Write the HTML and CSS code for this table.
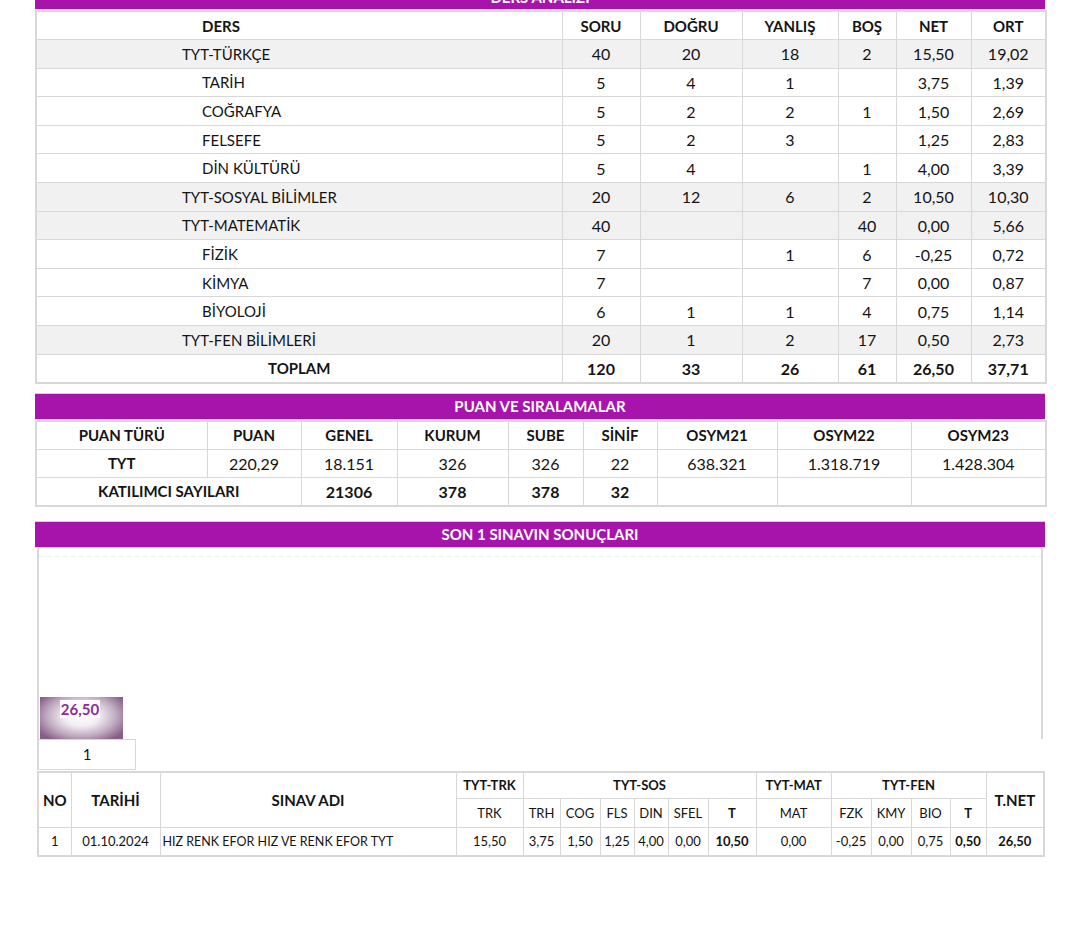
FILE: index.html
```html
<!DOCTYPE html>
<html lang="tr">
<head>
<meta charset="utf-8">
<title>Ders Analizi</title>
<link rel="stylesheet" href="styles.css">
</head>
<body>
<div class="page">
  <section class="block">
    <div class="bar">DERS ANALİZİ</div>
    <table class="t1">
      <colgroup>
        <col class="c-ders"><col class="c-soru"><col class="c-dogru"><col class="c-yanlis"><col class="c-bos"><col class="c-net"><col class="c-ort">
      </colgroup>
      <thead>
        <tr><th class="name sub">DERS</th><th>SORU</th><th>DOĞRU</th><th>YANLIŞ</th><th>BOŞ</th><th>NET</th><th>ORT</th></tr>
      </thead>
      <tbody>
        <tr class="main"><td class="name">TYT-TÜRKÇE</td><td>40</td><td>20</td><td>18</td><td>2</td><td>15,50</td><td>19,02</td></tr>
        <tr><td class="name sub">TARİH</td><td>5</td><td>4</td><td>1</td><td></td><td>3,75</td><td>1,39</td></tr>
        <tr><td class="name sub">COĞRAFYA</td><td>5</td><td>2</td><td>2</td><td>1</td><td>1,50</td><td>2,69</td></tr>
        <tr><td class="name sub">FELSEFE</td><td>5</td><td>2</td><td>3</td><td></td><td>1,25</td><td>2,83</td></tr>
        <tr><td class="name sub">DİN KÜLTÜRÜ</td><td>5</td><td>4</td><td></td><td>1</td><td>4,00</td><td>3,39</td></tr>
        <tr class="main"><td class="name">TYT-SOSYAL BİLİMLER</td><td>20</td><td>12</td><td>6</td><td>2</td><td>10,50</td><td>10,30</td></tr>
        <tr class="main"><td class="name">TYT-MATEMATİK</td><td>40</td><td></td><td></td><td>40</td><td>0,00</td><td>5,66</td></tr>
        <tr><td class="name sub">FİZİK</td><td>7</td><td></td><td>1</td><td>6</td><td>-0,25</td><td>0,72</td></tr>
        <tr><td class="name sub">KİMYA</td><td>7</td><td></td><td></td><td>7</td><td>0,00</td><td>0,87</td></tr>
        <tr><td class="name sub">BİYOLOJİ</td><td>6</td><td>1</td><td>1</td><td>4</td><td>0,75</td><td>1,14</td></tr>
        <tr class="main"><td class="name">TYT-FEN BİLİMLERİ</td><td>20</td><td>1</td><td>2</td><td>17</td><td>0,50</td><td>2,73</td></tr>
        <tr class="total"><td class="label">TOPLAM</td><td>120</td><td>33</td><td>26</td><td>61</td><td>26,50</td><td>37,71</td></tr>
      </tbody>
    </table>
  </section>

  <section class="block gap-s">
    <div class="bar">PUAN VE SIRALAMALAR</div>
    <table class="t2">
      <colgroup>
        <col class="p1"><col class="p2"><col class="p3"><col class="p4"><col class="p5"><col class="p6"><col class="p7"><col class="p8"><col class="p9">
      </colgroup>
      <tr><th>PUAN TÜRÜ</th><th>PUAN</th><th>GENEL</th><th>KURUM</th><th>SUBE</th><th>SİNİF</th><th>OSYM21</th><th>OSYM22</th><th>OSYM23</th></tr>
      <tr><th>TYT</th><td>220,29</td><td>18.151</td><td>326</td><td>326</td><td>22</td><td>638.321</td><td>1.318.719</td><td>1.428.304</td></tr>
      <tr class="bold"><td colspan="2">KATILIMCI SAYILARI</td><td>21306</td><td>378</td><td>378</td><td>32</td><td></td><td></td><td></td></tr>
    </table>
  </section>

  <section class="block gap-m">
    <div class="bar">SON 1 SINAVIN SONUÇLARI</div>
    <div class="chart">
      <div class="plot">
        <div class="column">
          <span class="col-label">26,50</span>
        </div>
      </div>
      <div class="axis">
        <div class="axis-cell">1</div>
      </div>
    </div>
    <table class="t4">
      <colgroup>
        <col class="w-no"><col class="w-tar"><col class="w-ad"><col class="w-trk"><col class="w-trh"><col class="w-cog"><col class="w-fls"><col class="w-din"><col class="w-sfel"><col class="w-t1"><col class="w-mat"><col class="w-fzk"><col class="w-kmy"><col class="w-bio"><col class="w-t2"><col class="w-tnet">
      </colgroup>
      <tr class="h1">
        <th rowspan="2" class="big">NO</th>
        <th rowspan="2" class="big">TARİHİ</th>
        <th rowspan="2" class="big">SINAV ADI</th>
        <th>TYT-TRK</th>
        <th colspan="6">TYT-SOS</th>
        <th>TYT-MAT</th>
        <th colspan="4">TYT-FEN</th>
        <th rowspan="2" class="big">T.NET</th>
      </tr>
      <tr class="h2">
        <td>TRK</td><td>TRH</td><td>COG</td><td>FLS</td><td>DIN</td><td>SFEL</td><th>T</th><td>MAT</td><td>FZK</td><td>KMY</td><td>BIO</td><th>T</th>
      </tr>
      <tr class="d">
        <td>1</td><td>01.10.2024</td><td class="left">HIZ RENK EFOR HIZ VE RENK EFOR TYT</td><td>15,50</td><td>3,75</td><td>1,50</td><td>1,25</td><td>4,00</td><td>0,00</td><th>10,50</th><td>0,00</td><td>-0,25</td><td>0,00</td><td>0,75</td><th>0,50</th><th>26,50</th>
      </tr>
    </table>
  </section>
</div>
</body>
</html>
```

FILE: styles.css
```css
* { box-sizing: border-box; }

body {
  margin: 0;
  background: #ffffff;
  font-family: Lato, "Open Sans", "Noto Sans", sans-serif;
  color: #141414;
}

.page {
  width: 1010px;
  margin: -17px 0 0 35px;
  display: flex;
  flex-direction: column;
}

.block { display: flex; flex-direction: column; }
.gap-s { margin-top: 9px; }
.gap-m { margin-top: 14px; }

.bar {
  height: 27px;
  background: #a714ab;
  border-top: 1px solid #eec0ee;
  border-bottom: 1px solid #f3d2f3;
  color: #ffffff;
  font-weight: 700;
  font-size: 15px;
  display: flex;
  align-items: center;
  justify-content: center;
}

table {
  width: 100%;
  border-collapse: collapse;
  table-layout: fixed;
  border: 2px solid #d8d8d8;
}

th, td {
  border: 1px solid #d8d8d8;
  padding: 0;
  text-align: center;
  white-space: nowrap;
  overflow: hidden;
  font-size: 16px;
  font-weight: 400;
}
th { font-weight: 700; font-size: 15px; }

/* DERS ANALIZI */
.t1 tr { height: 28.6px; }
.c-ders { width: 526px; }
.c-soru { width: 78px; }
.c-dogru { width: 102px; }
.c-yanlis { width: 96px; }
.c-bos { width: 58px; }
.c-net { width: 75px; }
.c-ort { width: 75px; }
.t1 .name { text-align: left; padding-left: 145px; font-size: 15px; }
.t1 .name.sub { padding-left: 165px; }
.t1 .main td { background: #f1f1f1; }
.t1 .total td { font-weight: 700; }
.t1 .total .label { font-size: 15px; }

/* PUAN VE SIRALAMALAR */
.t2 tr { height: 28.3px; }
.p1 { width: 171px; }
.p2 { width: 94px; }
.p3 { width: 96px; }
.p4 { width: 111px; }
.p5 { width: 75px; }
.p6 { width: 74px; }
.p7 { width: 120px; }
.p8 { width: 134px; }
.p9 { width: 135px; }
.t2 .bold td { font-weight: 700; }
.t2 .bold td:first-child { font-size: 15px; }

/* SON 1 SINAV CHART */
.chart {
  margin: 0 2px;
  display: flex;
  flex-direction: column;
}
.plot {
  height: 191px;
  border-left: 2px solid #d8d8d8;
  border-right: 2px solid #d8d8d8;
  display: flex;
  align-items: flex-end;
  padding-left: 1px;
  background-image: linear-gradient(to right, #ececec 50%, transparent 50%);
  background-size: 8px 1px;
  background-repeat: repeat-x;
  background-position: 0 8px;
}
.column {
  width: 83px;
  height: 42px;
  background: radial-gradient(ellipse 60% 70% at 50% 45%, #ffffff 0%, #f1eef1 35%, #bfa9bf 70%, #8a5d88 100%);
  display: flex;
  justify-content: center;
  align-items: flex-start;
  padding-top: 3px;
  padding-right: 3px;
}
.col-label {
  background: rgba(255, 255, 255, 0.92);
  color: #8f2a99;
  font-weight: 700;
  font-size: 15px;
  line-height: 18px;
  padding: 0 1px;
}
.axis {
  display: flex;
  height: 31px;
  border-left: 2px solid #d8d8d8;
}
.axis-cell {
  width: 97px;
  border: 1px solid #d8d8d8;
  border-left: 0;
  display: flex;
  align-items: center;
  justify-content: center;
  font-size: 15px;
}

/* SINAV TABLOSU */
.t4 { width: 1006px; margin: 1px 2px 0; }
.t4 th, .t4 td { font-size: 13px; }
.t4 .h1 { height: 27px; }
.t4 .h2 { height: 29px; }
.t4 .d { height: 28px; }
.t4 .h1 th.big { font-size: 15px; }
.t4 .left { text-align: left; padding-left: 2px; font-size: 12.5px; }
.w-no { width: 33px; }
.w-tar { width: 89px; }
.w-ad { width: 296px; }
.w-trk { width: 67px; }
.w-trh { width: 37px; }
.w-cog { width: 40px; }
.w-fls { width: 34px; }
.w-din { width: 34px; }
.w-sfel { width: 40px; }
.w-t1 { width: 48px; }
.w-mat { width: 75px; }
.w-fzk { width: 40px; }
.w-kmy { width: 40px; }
.w-bio { width: 39px; }
.w-t2 { width: 36px; }
.w-tnet { width: 58px; }
```
